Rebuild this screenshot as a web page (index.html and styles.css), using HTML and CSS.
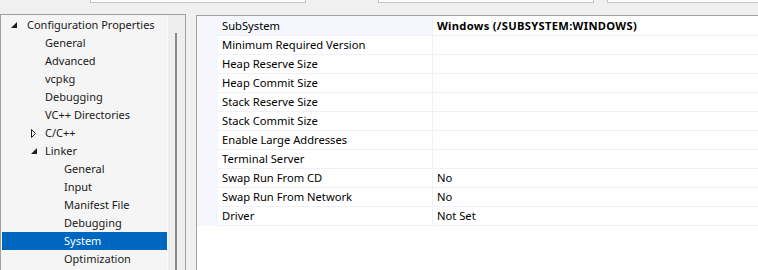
FILE: index.html
```html
<!DOCTYPE html>
<html>
<head>
<meta charset="utf-8">
<link rel="stylesheet" href="styles.css">
</head>
<body>
<div class="top">
  <div class="cbox b1"></div>
  <div class="cbox b2"></div>
  <div class="cbox b3"></div>
</div>
<div class="main">
  <div class="tree">
    <ul class="items">
      <li class="item l0"><span class="exp"><svg width="6" height="6" viewBox="0 0 6 6"><polygon points="6,0 6,6 0,6" fill="#1e1e1e"/></svg></span><span class="lbl">Configuration Properties</span></li>
      <li class="item l1"><span class="exp"></span><span class="lbl">General</span></li>
      <li class="item l1"><span class="exp"></span><span class="lbl">Advanced</span></li>
      <li class="item l1"><span class="exp"></span><span class="lbl">vcpkg</span></li>
      <li class="item l1"><span class="exp"></span><span class="lbl">Debugging</span></li>
      <li class="item l1"><span class="exp"></span><span class="lbl">VC++ Directories</span></li>
      <li class="item l1"><span class="exp"><svg width="5" height="9" viewBox="0 0 5 9"><polygon points="0.5,0.5 4.5,4.5 0.5,8.5" fill="none" stroke="#1e1e1e" stroke-width="1"/></svg></span><span class="lbl">C/C++</span></li>
      <li class="item l1"><span class="exp"><svg width="6" height="6" viewBox="0 0 6 6"><polygon points="6,0 6,6 0,6" fill="#1e1e1e"/></svg></span><span class="lbl">Linker</span></li>
      <li class="item l2"><span class="exp"></span><span class="lbl">General</span></li>
      <li class="item l2"><span class="exp"></span><span class="lbl">Input</span></li>
      <li class="item l2"><span class="exp"></span><span class="lbl">Manifest File</span></li>
      <li class="item l2"><span class="exp"></span><span class="lbl">Debugging</span></li>
      <li class="item l2 sel"><span class="exp"></span><span class="lbl">System</span></li>
      <li class="item l2"><span class="exp"></span><span class="lbl">Optimization</span></li>
    </ul>
    <div class="vscroll"><div class="thumb"></div></div>
  </div>
  <div class="grid">
    <div class="row first"><div class="gut"></div><div class="name">SubSystem</div><div class="val bold">Windows (/SUBSYSTEM:WINDOWS)</div></div>
    <div class="row"><div class="gut"></div><div class="name">Minimum Required Version</div><div class="val"></div></div>
    <div class="row"><div class="gut"></div><div class="name">Heap Reserve Size</div><div class="val"></div></div>
    <div class="row"><div class="gut"></div><div class="name">Heap Commit Size</div><div class="val"></div></div>
    <div class="row"><div class="gut"></div><div class="name">Stack Reserve Size</div><div class="val"></div></div>
    <div class="row"><div class="gut"></div><div class="name">Stack Commit Size</div><div class="val"></div></div>
    <div class="row"><div class="gut"></div><div class="name">Enable Large Addresses</div><div class="val"></div></div>
    <div class="row"><div class="gut"></div><div class="name">Terminal Server</div><div class="val"></div></div>
    <div class="row"><div class="gut"></div><div class="name">Swap Run From CD</div><div class="val">No</div></div>
    <div class="row"><div class="gut"></div><div class="name">Swap Run From Network</div><div class="val">No</div></div>
    <div class="row"><div class="gut"></div><div class="name">Driver</div><div class="val">Not Set</div></div>
  </div>
</div>
</body>
</html>
```
FILE: styles.css
```css
html, body {
  margin: 0;
  padding: 0;
}
body {
  background: #f0f0f0;
  width: 758px;
  height: 270px;
  overflow: hidden;
  font-family: "Noto Sans", sans-serif;
  font-size: 11px;
  color: #1a1a1a;
}
.top {
  height: 14px;
  display: flex;
}
.cbox {
  height: 2px;
  background: #fdfdfd;
  border: 1px solid #c4c4c4;
  border-top: 0;
}
.b1 { margin-left: 90px; width: 214px; }
.b2 { margin-left: 72px; width: 214px; }
.b3 { margin-left: 13px; flex: 1; border-right: 0; }

.main {
  display: flex;
  height: 256px;
}
.tree {
  width: 184px;
  border: 1px solid #a0a0a0;
  border-bottom: 0;
  display: flex;
  background: #f5f5f5;
}
.items {
  list-style: none;
  margin: 0;
  padding: 1px 0 0 0;
  width: 166px;
  border-right: 1px solid #fafafa;
}
.item {
  display: flex;
  align-items: center;
  height: 18px;
  line-height: 18px;
  margin-left: 1px;
  white-space: nowrap;
}
.item.l0 { padding-left: 9px; }
.item.l1 { padding-left: 27px; }
.item.l2 { padding-left: 46px; }
.exp {
  width: 16px;
  height: 18px;
  display: flex;
  align-items: center;
  flex: none;
}
.l1 .exp svg { margin-left: 2px; }
.item.sel {
  background: #0067c0;
  color: #ffffff;
}
.vscroll {
  width: 17px;
  background: #eeeeee;
}
.thumb {
  margin-left: 7px;
  margin-top: 18px;
  width: 2px;
  height: 240px;
  background: #8a8a8a;
}

.grid {
  flex: 1;
  margin-left: 10px;
  margin-top: 1px;
  border-top: 1px solid #a0a0a0;
  border-left: 1px solid #a0a0a0;
  background: #ffffff;
  color: #000000;
  font-size: 11.2px;
}
.row {
  display: flex;
  height: 19px;
}
.row.first {
  height: 20px;
}
.gut {
  width: 21px;
  flex: none;
  background: #f5f7fc;
}
.name, .val {
  height: 18px;
  line-height: 18px;
  padding-left: 4px;
  border-bottom: 1px solid #eef1f8;
  white-space: nowrap;
}
.first .name, .first .val {
  height: 19px;
  line-height: 20px;
}
.name {
  width: 210px;
  flex: none;
  border-right: 1px solid #eef1f8;
}
.first .name {
  background: #f5f7fc;
}
.val {
  flex: 1;
}
.bold {
  font-weight: 700;
  letter-spacing: 0.3px;
}
```
